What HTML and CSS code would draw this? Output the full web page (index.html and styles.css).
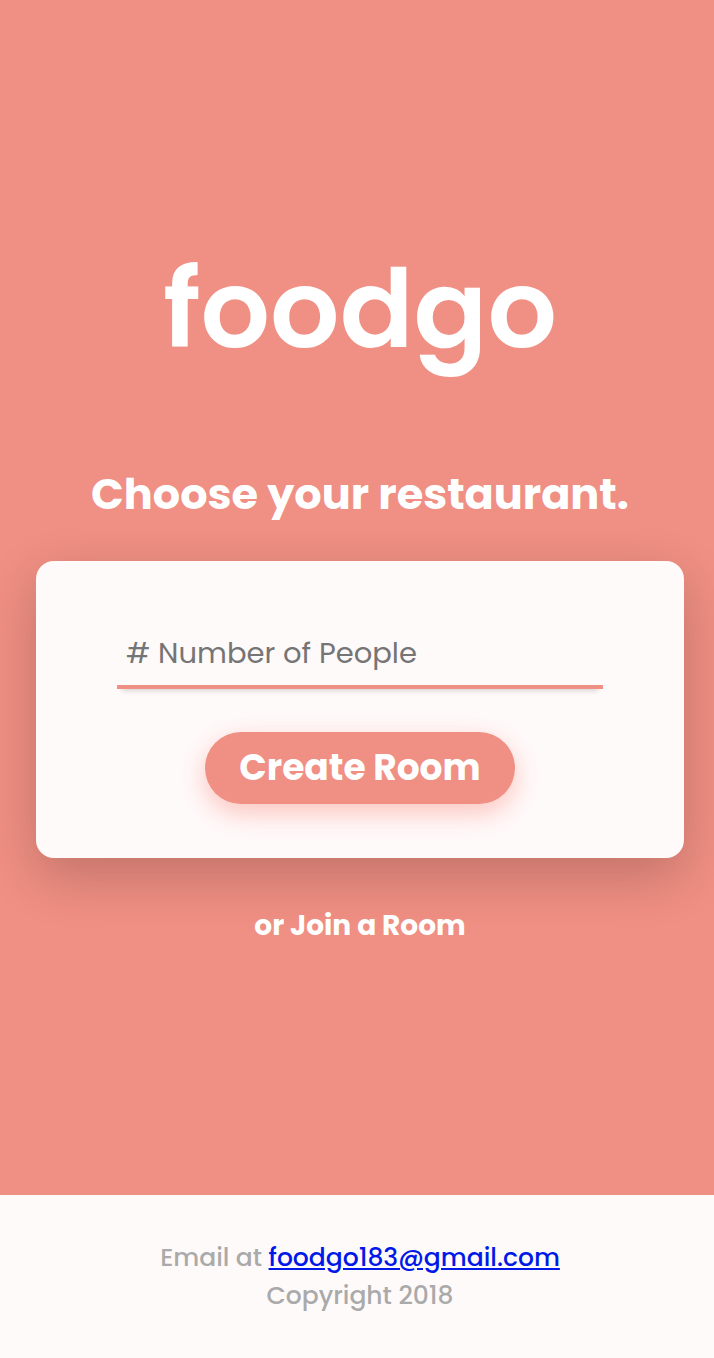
FILE: index.html
```
<!DOCTYPE html>
<html lang="en">
<head>
<meta charset="utf-8">
<meta name="viewport" content="width=device-width, initial-scale=1">
<title>foodgo</title>
<link rel="stylesheet" href="styles.css">
</head>
<body>
<main class="hero">
  <h1 class="logo">foodgo</h1>
  <h2 class="tagline">Choose your restaurant.</h2>
  <form class="card">
    <input class="people" type="text" aria-label="Number of people" placeholder="# Number of People">
    <button class="create" type="button">Create Room</button>
  </form>
  <a class="join" href="#join">or Join a Room</a>
</main>
<footer class="footer">
  <p class="line">Email at <a class="mail" href="mailto:foodgo183@gmail.com">foodgo183@gmail.com</a></p>
  <p class="line">Copyright 2018</p>
</footer>
</body>
</html>
```
FILE: styles.css
```
* {
  box-sizing: border-box;
}

body {
  margin: 0;
  min-height: 100vh;
  display: flex;
  flex-direction: column;
  background: #fffafa;
  font-family: Poppins, Inter, "Open Sans", sans-serif;
}

.hero {
  flex: 1;
  display: flex;
  flex-direction: column;
  align-items: center;
  padding: 222px 30px 0 36px;
  background: #f08f83;
  color: #fff;
}

.logo {
  margin: 0;
  font-size: 109px;
  line-height: 174px;
  font-weight: 600;
}

.tagline {
  margin: 64px 0 0;
  font-size: 43px;
  line-height: 68px;
  font-weight: 700;
  text-align: center;
}

.card {
  width: 100%;
  margin-top: 33px;
  padding: 61px 54px 54px;
  display: flex;
  flex-direction: column;
  align-items: center;
  border-radius: 18px;
  background: #fffafa;
  box-shadow: 0 18px 54px rgba(0, 0, 0, 0.2);
}

.people {
  width: 90%;
  height: 67px;
  padding: 0 9px;
  border: 0;
  border-bottom: 4px solid #f08f83;
  border-radius: 0;
  background: transparent;
  box-shadow: 0 7px 5px -5px rgba(0, 0, 0, 0.15);
  font: 400 29px/44px Poppins, Inter, "Open Sans", sans-serif;
}

.people::placeholder {
  color: #757575;
}

.create {
  height: 72px;
  margin-top: 43px;
  padding: 0 34px;
  border: 0;
  border-radius: 36px;
  background: #f08f83;
  color: #fff;
  box-shadow: 0 9px 27px rgba(241, 70, 50, 0.3);
  font: 700 36px/56px Poppins, Inter, "Open Sans", sans-serif;
}

.join {
  margin-top: 45px;
  color: #fff;
  font-size: 28px;
  line-height: 45px;
  font-weight: 700;
  text-decoration: none;
}

.footer {
  padding: 44px 30px 43px 36px;
  color: #aaa;
  text-align: center;
  font-size: 25px;
  line-height: 38px;
  font-weight: 500;
}

.line {
  margin: 0;
}

.mail {
  color: #0019e8;
}
```
